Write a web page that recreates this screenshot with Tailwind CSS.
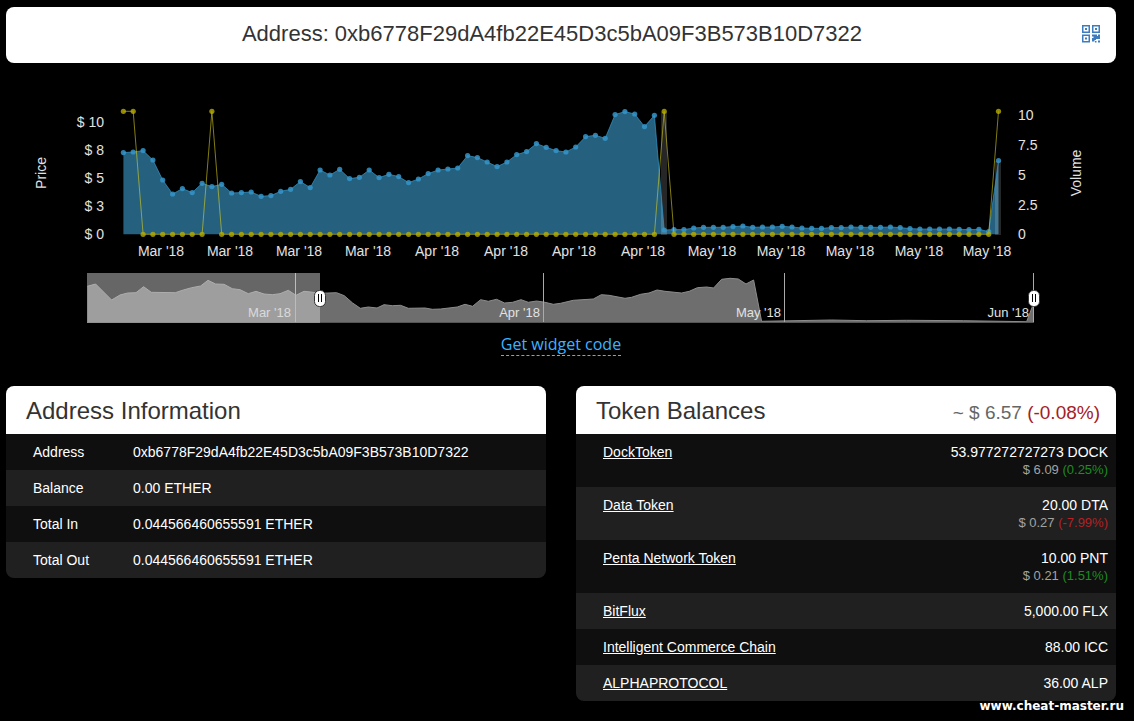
<!DOCTYPE html>
<html lang="en">
<head>
    <meta charset="UTF-8">
    <meta name="viewport" content="width=device-width, initial-scale=1.0">
    <title>Address: 0xb6778F29dA4fb22E45D3c5bA09F3B573B10D7322</title>
    <script src="https://cdn.jsdelivr.net/npm/@tailwindcss/browser@4"></script>
</head>
<body class="bg-black font-['Liberation_Sans',Arial,sans-serif] text-sm text-white">

    <main class="relative pt-[7px] pr-[18px] pb-5 pl-[6px]">

        <!-- ADDRESS HEADER -->
        <header class="flex h-14 items-center rounded-lg bg-white px-4 pb-0.5">
            <h1 class="flex-1 text-center text-[22px] leading-6 text-[#333]">Address: 0xb6778F29dA4fb22E45D3c5bA09F3B573B10D7322</h1>
            <button type="button" aria-label="Show QR code" class="cursor-pointer text-[#3d7cbd]">
                <svg class="block h-[18px] w-[18px]" viewBox="0 0 18 18" fill="currentColor">
                    <path fill-rule="evenodd" d="M0 0h8v8H0zM1.500 1.500v5h5v-5zM10 0h8v8h-8zM11.500 1.500v5h5v-5zM0 9.500h8v8H0zM1.500 11v5h5v-5z"/>
                    <path d="M3 3h2v2H3zM13 3h2v2h-2zM3 12.500h2v2H3zM10 9.500h5v1.500h1V9.500h2v4.500h-4v1h-1.500v1.500H10V13h1.500v-1.500H10zM13 16h1.500v1.500H13zM16 15.500h2v2h-2z"/>
                </svg>
            </button>
        </header>

        <!-- PRICE / VOLUME CHART -->
        <svg id="chart" class="block w-full" viewBox="0 0 1110 264" role="img" aria-label="Price and volume history">
            <path id="price-area" fill="#25617f"/>
            <g fill="#fff" fill-opacity=".15">
                <rect x="655" y="49" width="6" height="123"/>
                <rect x="989" y="98" width="6" height="74"/>
            </g>
            <path id="price-line" fill="none" stroke="#3595c9" stroke-opacity=".7"/>
            <g id="price-dots" fill="#3595c9" fill-opacity=".85"></g>
            <path id="volume-line" fill="none" stroke="#d8ce20" stroke-opacity=".6"/>
            <g id="volume-dots" fill="#b5ad00" fill-opacity=".8"></g>

            <g font-size="14" fill="#e2e2e2">
                <g text-anchor="end">
                    <text x="98" y="64">$ 10</text>
                    <text x="98" y="92">$ 8</text>
                    <text x="98" y="120">$ 5</text>
                    <text x="98" y="148">$ 3</text>
                    <text x="98" y="176">$ 0</text>
                </g>
                <text x="1012" y="57">10</text>
                <text x="1012" y="87">7.5</text>
                <text x="1012" y="117">5</text>
                <text x="1012" y="147">2.5</text>
                <text x="1012" y="176">0</text>
                <g id="date-labels" text-anchor="middle"></g>
                <text text-anchor="middle" transform="translate(40 110) rotate(-90)">Price</text>
                <text text-anchor="middle" transform="translate(1075 110) rotate(-90)">Volume</text>
            </g>

            <!-- range selector -->
            <path id="nav-area" fill="#6e6e6e"/>
            <path id="nav-line" fill="none" stroke="#8c8c8c"/>
            <path d="M81 259.500H1028" stroke="#555"/>
            <path d="M289.500 210v49M537.500 210v49M778.500 210v49M1027.500 210v49" stroke="#aaa"/>
            <g font-size="13" fill="#e2e2e2" text-anchor="end">
                <text x="285" y="254">Mar '18</text>
                <text x="534" y="254">Apr '18</text>
                <text x="775" y="254">May '18</text>
                <text x="1023" y="254">Jun '18</text>
            </g>
            <rect x="81" y="210" width="233" height="50" fill="#d0d0d0" fill-opacity=".49"/>
            <g fill="#fff" stroke="#333">
                <rect x="308.500" y="227.500" width="11" height="16" rx="5"/>
                <rect x="1022.500" y="227.500" width="11" height="16" rx="5"/>
            </g>
            <path d="M312.500 231v8M315.500 231v8M1026.500 231v8M1029.500 231v8" stroke="#000"/>
        </svg>

        <div class="flex h-[59px] justify-center pt-1">
            <a href="#" class="h-[25px] border-b border-dashed border-[#47b8ff] font-['Open_Sans',sans-serif] text-base leading-[26px] text-[#3bb3ff]">Get widget code</a>
        </div>

        <div class="grid grid-cols-2 items-start gap-[30px]">
            <!-- ADDRESS INFORMATION -->
            <section class="overflow-hidden rounded-lg">
                <h2 class="h-12 bg-white pl-5 text-2xl leading-[50px] text-[#333]">Address Information</h2>
                <table class="w-full text-left leading-5">
                    <tbody>
                        <tr class="bg-[#0f0f0f]">
                            <th class="w-[127px] py-2 pl-[27px] font-normal">Address</th>
                            <td class="py-2">0xb6778F29dA4fb22E45D3c5bA09F3B573B10D7322</td>
                        </tr>
                        <tr class="bg-[#202020]">
                            <th class="py-2 pl-[27px] font-normal">Balance</th>
                            <td class="py-2">0.00 ETHER</td>
                        </tr>
                        <tr class="bg-[#0f0f0f]">
                            <th class="py-2 pl-[27px] font-normal">Total In</th>
                            <td class="py-2">0.044566460655591 ETHER</td>
                        </tr>
                        <tr class="bg-[#202020]">
                            <th class="py-2 pl-[27px] font-normal">Total Out</th>
                            <td class="py-2">0.044566460655591 ETHER</td>
                        </tr>
                    </tbody>
                </table>
            </section>

            <!-- TOKEN BALANCES -->
            <section class="overflow-hidden rounded-lg">
                <div class="flex h-12 justify-between bg-white pr-4 pl-5">
                    <h2 class="text-2xl leading-[50px] text-[#333]">Token Balances</h2>
                    <p class="text-[19px] leading-[54px] text-[#666]">~ $ 6.57 <span class="text-[#a52024]">(-0.08%)</span></p>
                </div>
                <table class="w-full leading-5">
                    <tbody class="align-top">
                        <tr class="bg-[#0f0f0f]">
                            <td class="py-2 pl-[27px]"><a href="#" class="underline">DockToken</a></td>
                            <td class="py-2 pr-2 text-right">53.977272727273 DOCK
                                <div class="pb-0.5 text-[13px] leading-[15px] text-[#a3a3a3]">$ 6.09 <span class="text-[#1f8b24]">(0.25%)</span></div>
                            </td>
                        </tr>
                        <tr class="bg-[#202020]">
                            <td class="py-2 pl-[27px]"><a href="#" class="underline">Data Token</a></td>
                            <td class="py-2 pr-2 text-right">20.00 DTA
                                <div class="pb-0.5 text-[13px] leading-[15px] text-[#a3a3a3]">$ 0.27 <span class="text-[#b22226]">(-7.99%)</span></div>
                            </td>
                        </tr>
                        <tr class="bg-[#0f0f0f]">
                            <td class="py-2 pl-[27px]"><a href="#" class="underline">Penta Network Token</a></td>
                            <td class="py-2 pr-2 text-right">10.00 PNT
                                <div class="pb-0.5 text-[13px] leading-[15px] text-[#a3a3a3]">$ 0.21 <span class="text-[#1f8b24]">(1.51%)</span></div>
                            </td>
                        </tr>
                        <tr class="bg-[#202020]">
                            <td class="py-2 pl-[27px]"><a href="#" class="underline">BitFlux</a></td>
                            <td class="py-2 pr-2 text-right">5,000.00 FLX</td>
                        </tr>
                        <tr class="bg-[#0f0f0f]">
                            <td class="py-2 pl-[27px]"><a href="#" class="underline">Intelligent Commerce Chain</a></td>
                            <td class="py-2 pr-2 text-right">88.00 ICC</td>
                        </tr>
                        <tr class="bg-[#202020]">
                            <td class="py-2 pl-[27px]"><a href="#" class="underline">ALPHAPROTOCOL</a></td>
                            <td class="py-2 pr-2 text-right">36.00 ALP</td>
                        </tr>
                    </tbody>
                </table>
            </section>
        </div>

        <div class="absolute right-2.5 bottom-[7px] font-['DejaVu_Sans',sans-serif] text-xs leading-4 font-bold">www.cheat-master.ru</div>
    </main>

    <script>
        // --- Daily series, height above the zero line in thirds of a pixel ---
        const price = [
            245, 247, 251, 223, 163, 121, 137, 125, 153, 143, 150, 124, 125, 127, 114, 116, 129, 135, 158, 140,
            193, 178, 195, 167, 171, 193, 170, 180, 173, 155, 166, 182, 193, 196, 199, 236, 230, 217, 203, 217,
            239, 248, 272, 261, 251, 247, 262, 293, 297, 288, 359, 368, 361, 323, 357, 13, 14, 14, 19, 21,
            21, 21, 23, 25, 21, 22, 22, 24, 22, 19, 18, 18, 20, 20, 22, 21, 21, 21, 22, 20,
            17, 16, 16, 16, 16, 15, 14, 15, 8, 221
        ];
        const volumeDays = [0, 1, 9, 55, 89];
        const volume = price.map((_, i) => volumeDays.includes(i) ? 369 : 0);

        // Range selector outline, [x, y] in thirds of a pixel
        const nav = [
            [0, 37], [25, 30], [73, 78], [98, 63], [121, 57], [146, 56], [169, 38], [192, 55], [264, 56], [288, 48],
            [313, 41], [340, 36], [362, 19], [385, 30], [410, 31], [435, 44], [458, 47], [483, 59], [506, 52], [530, 60],
            [555, 62], [578, 59], [603, 49], [626, 64], [650, 52], [678, 55], [698, 58], [748, 56], [771, 65], [796, 87],
            [819, 103], [843, 99], [869, 102], [890, 92], [915, 95], [940, 94], [963, 103], [1013, 102], [1035, 106], [1060, 105],
            [1110, 99], [1133, 91], [1156, 97], [1180, 77], [1203, 82], [1228, 76], [1252, 87], [1276, 85], [1301, 77], [1323, 85],
            [1348, 81], [1373, 85], [1398, 91], [1420, 88], [1458, 79], [1518, 75], [1542, 62], [1565, 64], [1613, 73], [1633, 70],
            [1660, 61], [1685, 57], [1709, 48], [1733, 52], [1783, 57], [1806, 52], [1830, 41], [1858, 39], [1879, 42], [1903, 16],
            [1928, 13], [1953, 15], [1976, 30], [1999, 18], [2023, 142], [2233, 138], [2338, 140], [2458, 139], [2628, 140], [2818, 143],
            [2840, 85]
        ];

        const left = 117.4, step = 9.833, base = 171.3;
        const toPoints = values => values.map((v, i) => [left + i * step, base - v / 3]);
        const toPath = points => 'M' + points.map(p => p[0].toFixed(1) + ' ' + p[1].toFixed(1)).join('L');
        const toDots = points => points.map(p => `<circle cx="${p[0].toFixed(1)}" cy="${p[1].toFixed(1)}" r="2.6"/>`).join('');
        const byId = id => document.getElementById(id);

        const pricePoints = toPoints(price);
        const volumePoints = toPoints(volume);

        byId('price-area').setAttribute('d', toPath(pricePoints) + `V${base}H${left}Z`);
        byId('price-line').setAttribute('d', toPath(pricePoints));
        byId('volume-line').setAttribute('d', toPath(volumePoints));
        byId('price-dots').innerHTML = toDots(pricePoints);
        byId('volume-dots').innerHTML = toDots(volumePoints);

        const navPath = toPath(nav.map(p => [81.3 + p[0] / 3, 211 + p[1] / 3]));
        byId('nav-area').setAttribute('d', navPath + 'V259.5H81.3Z');
        byId('nav-line').setAttribute('d', navPath);

        // --- Date axis ---
        const months = ['Mar', 'Mar', 'Mar', 'Mar', 'Apr', 'Apr', 'Apr', 'Apr', 'May', 'May', 'May', 'May', 'May'];
        byId('date-labels').innerHTML = months.map((m, i) => `<text x="${Math.round(155.4 + i * 68.83)}" y="193">${m} '18</text>`).join('');
    </script>
</body>
</html>
